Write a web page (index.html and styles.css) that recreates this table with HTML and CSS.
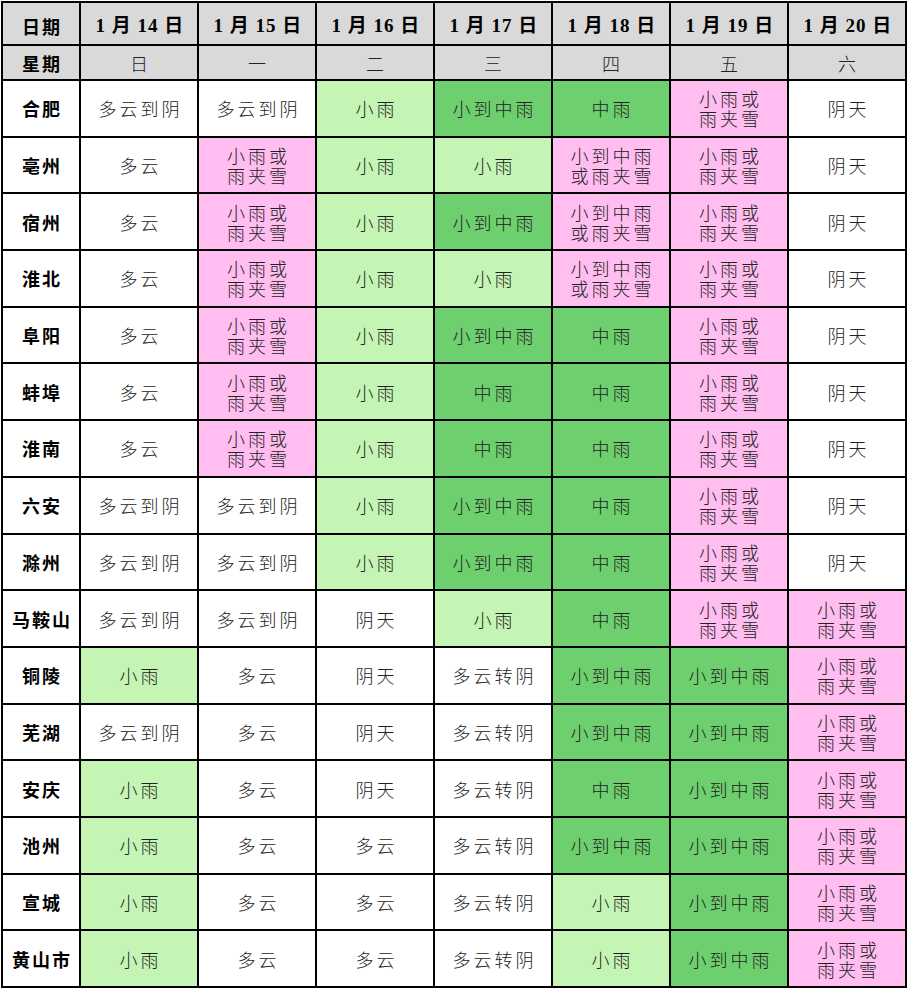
FILE: index.html
```html
<!DOCTYPE html>
<html lang="zh-CN">
<head>
<meta charset="utf-8">
<title>天气预报</title>
<link rel="stylesheet" href="styles.css">
</head>
<body>
<table class="wx">
<colgroup>
<col class="c-city"><col class="c-day"><col class="c-day"><col class="c-day"><col class="c-day"><col class="c-day"><col class="c-day"><col class="c-day">
</colgroup>
<tr class="h1">
<th class="hl">日期</th><th>1 月 14 日</th><th>1 月 15 日</th><th>1 月 16 日</th><th>1 月 17 日</th><th>1 月 18 日</th><th>1 月 19 日</th><th>1 月 20 日</th>
</tr>
<tr class="h2">
<th class="hl">星期</th><td>日</td><td>一</td><td>二</td><td>三</td><td>四</td><td>五</td><td>六</td>
</tr>
<tr><th>合肥</th><td>多云到阴</td><td>多云到阴</td><td class="lg">小雨</td><td class="dg">小到中雨</td><td class="dg">中雨</td><td class="pk">小雨或<br>雨夹雪</td><td>阴天</td></tr>
<tr><th>亳州</th><td>多云</td><td class="pk">小雨或<br>雨夹雪</td><td class="lg">小雨</td><td class="lg">小雨</td><td class="pk">小到中雨<br>或雨夹雪</td><td class="pk">小雨或<br>雨夹雪</td><td>阴天</td></tr>
<tr><th>宿州</th><td>多云</td><td class="pk">小雨或<br>雨夹雪</td><td class="lg">小雨</td><td class="dg">小到中雨</td><td class="pk">小到中雨<br>或雨夹雪</td><td class="pk">小雨或<br>雨夹雪</td><td>阴天</td></tr>
<tr><th>淮北</th><td>多云</td><td class="pk">小雨或<br>雨夹雪</td><td class="lg">小雨</td><td class="lg">小雨</td><td class="pk">小到中雨<br>或雨夹雪</td><td class="pk">小雨或<br>雨夹雪</td><td>阴天</td></tr>
<tr><th>阜阳</th><td>多云</td><td class="pk">小雨或<br>雨夹雪</td><td class="lg">小雨</td><td class="dg">小到中雨</td><td class="dg">中雨</td><td class="pk">小雨或<br>雨夹雪</td><td>阴天</td></tr>
<tr><th>蚌埠</th><td>多云</td><td class="pk">小雨或<br>雨夹雪</td><td class="lg">小雨</td><td class="dg">中雨</td><td class="dg">中雨</td><td class="pk">小雨或<br>雨夹雪</td><td>阴天</td></tr>
<tr><th>淮南</th><td>多云</td><td class="pk">小雨或<br>雨夹雪</td><td class="lg">小雨</td><td class="dg">中雨</td><td class="dg">中雨</td><td class="pk">小雨或<br>雨夹雪</td><td>阴天</td></tr>
<tr><th>六安</th><td>多云到阴</td><td>多云到阴</td><td class="lg">小雨</td><td class="dg">小到中雨</td><td class="dg">中雨</td><td class="pk">小雨或<br>雨夹雪</td><td>阴天</td></tr>
<tr><th>滁州</th><td>多云到阴</td><td>多云到阴</td><td class="lg">小雨</td><td class="dg">小到中雨</td><td class="dg">中雨</td><td class="pk">小雨或<br>雨夹雪</td><td>阴天</td></tr>
<tr><th>马鞍山</th><td>多云到阴</td><td>多云到阴</td><td>阴天</td><td class="lg">小雨</td><td class="dg">中雨</td><td class="pk">小雨或<br>雨夹雪</td><td class="pk">小雨或<br>雨夹雪</td></tr>
<tr><th>铜陵</th><td class="lg">小雨</td><td>多云</td><td>阴天</td><td>多云转阴</td><td class="dg">小到中雨</td><td class="dg">小到中雨</td><td class="pk">小雨或<br>雨夹雪</td></tr>
<tr><th>芜湖</th><td>多云到阴</td><td>多云</td><td>阴天</td><td>多云转阴</td><td class="dg">小到中雨</td><td class="dg">小到中雨</td><td class="pk">小雨或<br>雨夹雪</td></tr>
<tr><th>安庆</th><td class="lg">小雨</td><td>多云</td><td>阴天</td><td>多云转阴</td><td class="dg">中雨</td><td class="dg">小到中雨</td><td class="pk">小雨或<br>雨夹雪</td></tr>
<tr><th>池州</th><td class="lg">小雨</td><td>多云</td><td>多云</td><td>多云转阴</td><td class="dg">小到中雨</td><td class="dg">小到中雨</td><td class="pk">小雨或<br>雨夹雪</td></tr>
<tr><th>宣城</th><td class="lg">小雨</td><td>多云</td><td>多云</td><td>多云转阴</td><td class="lg">小雨</td><td class="dg">小到中雨</td><td class="pk">小雨或<br>雨夹雪</td></tr>
<tr><th>黄山市</th><td class="lg">小雨</td><td>多云</td><td>多云</td><td>多云转阴</td><td class="lg">小雨</td><td class="dg">小到中雨</td><td class="pk">小雨或<br>雨夹雪</td></tr>
</table>
</body>
</html>
```
FILE: styles.css
```css
html, body {
  margin: 0;
  padding: 0;
  background: #ffffff;
}
body {
  padding: 1px 0 0 1px;
}
.wx {
  border-collapse: collapse;
  table-layout: fixed;
  width: 906px;
  font-family: "Noto Sans CJK SC", sans-serif;
  color: #1a1a1a;
}
.c-city { width: 78px; }
.c-day { width: 118px; }
.wx th, .wx td {
  border: 2px solid #000;
  padding: 0 0 0 3px;
  text-align: center;
  vertical-align: middle;
  font-size: 18px;
  line-height: 20px;
  letter-spacing: 3px;
}
.wx td {
  font-weight: 300;
  color: #222;
}
.wx th {
  font-weight: 700;
  color: #000;
  letter-spacing: 2px;
  padding-left: 2px;
}
.wx tr { height: 56.7px; }
.wx tr.h1 { height: 43px; }
.wx tr.h2 { height: 35px; }
.h1 th, .h2 th, .h2 td {
  background: #d9d9d9;
}
.h1 th {
  font-family: "Liberation Serif", "Noto Sans CJK SC", serif;
  font-size: 19px;
  letter-spacing: 1px;
  padding-top: 5px;
}
.h1 th.hl, .h2 th.hl {
  font-family: "Noto Sans CJK SC", sans-serif;
  font-size: 18px;
  letter-spacing: 2px;
}
.lg { background: #c4f5b4; }
.dg { background: #6ecf6e; }
.pk { background: #ffbdf0; }
```
